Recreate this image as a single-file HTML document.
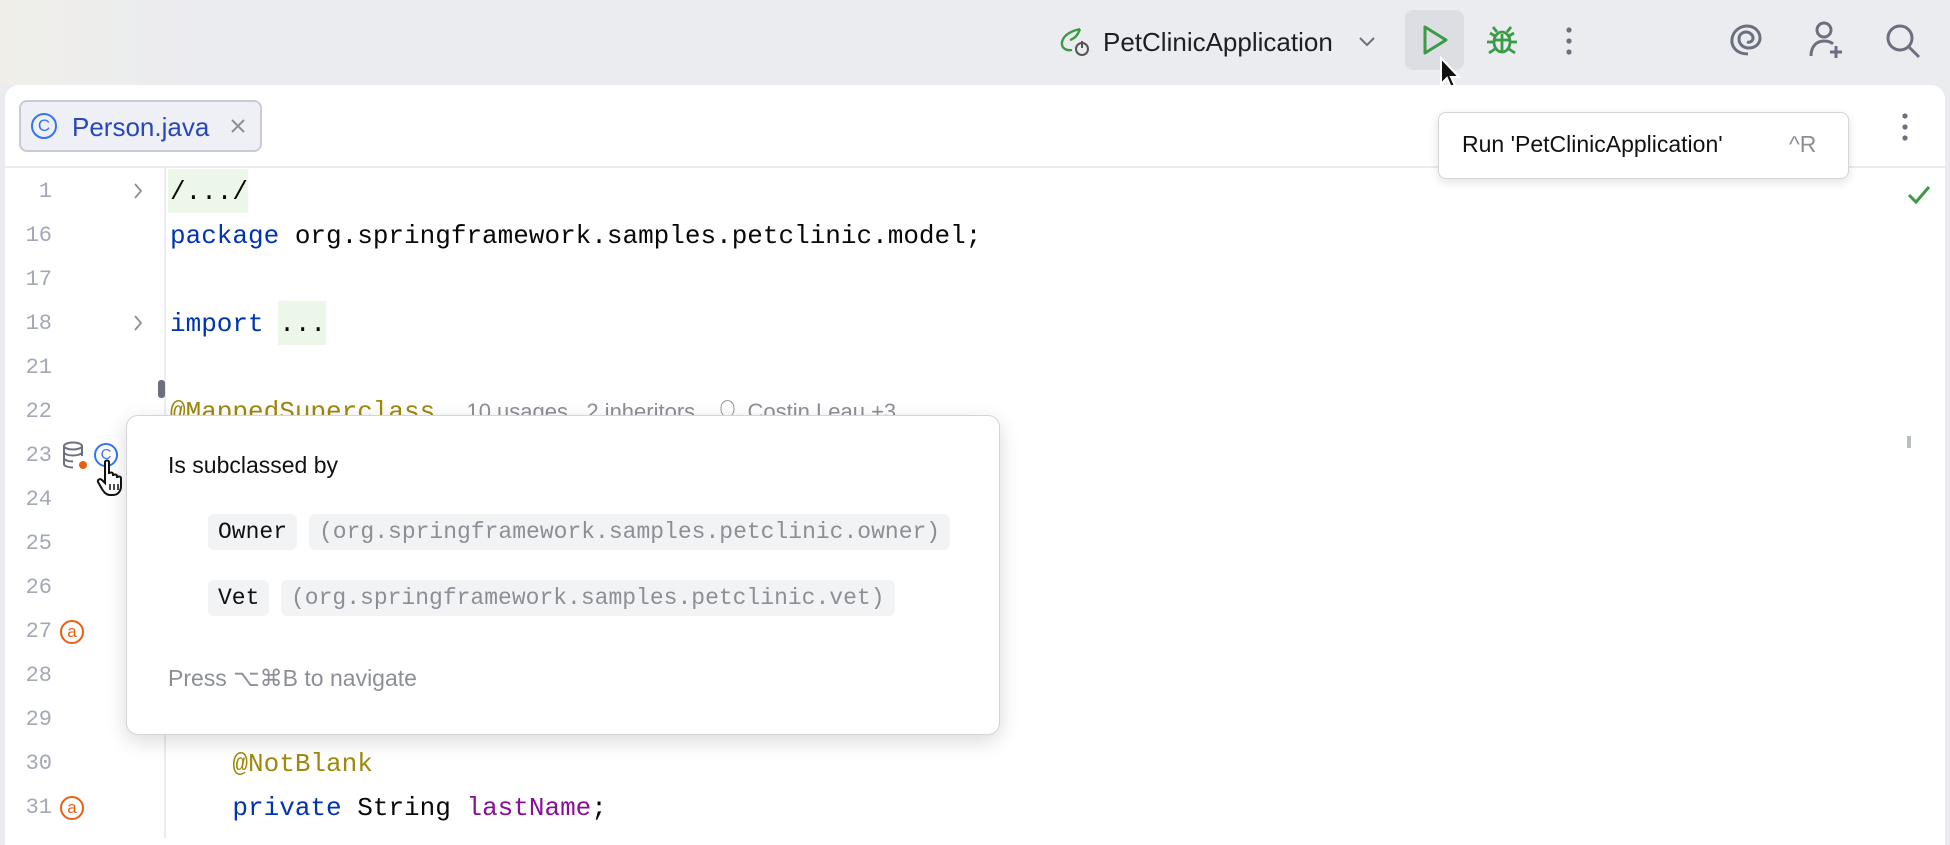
<!DOCTYPE html>
<html><head><meta charset="utf-8">
<style>
*{margin:0;padding:0;box-sizing:border-box}
body{width:1950px;height:838px;overflow:hidden;background:#ebecf0;font-family:"Liberation Sans",sans-serif;position:relative}
.top{position:absolute;left:0;top:0;width:1950px;height:85px;background:linear-gradient(90deg,#efeee9 0,#ebecf0 200px)}
.ed{position:absolute;left:5px;top:85px;width:1940px;height:760px;background:#fff;border-radius:14px 14px 0 0}
.abs{position:absolute}
.mono{font-family:"Liberation Mono",monospace}
.ln{position:absolute;left:0;width:52px;text-align:right;font-family:"Liberation Mono",monospace;font-size:22px;color:#a3a8b4;line-height:44px}
.code{position:absolute;left:170px;font-family:"Liberation Mono",monospace;font-size:26px;color:#080808;line-height:44px;white-space:pre}
.kw{color:#0033b3}.an{color:#9e880d}.fd{color:#871094}
.hint{font-family:"Liberation Sans",sans-serif;font-size:22px;color:#8c8f96}
.chip{position:absolute;height:36px;line-height:36px;background:#f2f3f5;border-radius:6px;padding:0 10px;font-family:"Liberation Mono",monospace;font-size:23px;white-space:pre}
.ai{position:absolute;left:60px;width:24px;height:24px;border:2px solid #e5600f;border-radius:50%;color:#e5600f;font-size:17px;line-height:19px;text-align:center}
</style></head><body>
<div class="top"></div>
<!-- top toolbar -->
<svg class="abs" style="left:1058px;top:26px" width="36" height="32" viewBox="0 0 36 32"><path d="M22 3 C14 5 6 8 4 16 C3 22 8 25 14 24" fill="none" stroke="#3b9b45" stroke-width="2.4"/><path d="M22 3 C20 8 18 12 12 14" fill="none" stroke="#3b9b45" stroke-width="2.4"/><circle cx="24" cy="23" r="6" fill="none" stroke="#555" stroke-width="2"/><path d="M24 15v7" stroke="#555" stroke-width="2"/></svg>
<div class="abs" style="left:1103px;top:27px;font-size:26px;color:#1e1f22">PetClinicApplication</div>
<svg class="abs" style="left:1358px;top:36px" width="18" height="12"><path d="M2 2l7 7 7-7" fill="none" stroke="#6c707e" stroke-width="2"/></svg>
<div class="abs" style="left:1405px;top:10px;width:59px;height:60px;background:#dcdee3;border-radius:8px"></div>
<svg class="abs" style="left:1420px;top:24px" width="30" height="32"><path d="M5 3 L26 16 L5 29 Z" fill="none" stroke="#3b9b45" stroke-width="3" stroke-linejoin="round"/></svg>
<svg class="abs" style="left:1484px;top:22px" width="36" height="36" viewBox="0 0 36 36" fill="none" stroke="#3b9b45" stroke-width="2.8"><ellipse cx="18" cy="20" rx="8" ry="10"/><path d="M10 18h16M18 12v18M13 10l-4-5M23 10l4-5M10 20H3M26 20h7M11 27l-6 4M25 27l6 4M11 14l-5-3M25 14l5-3"/></svg>
<svg class="abs" style="left:1564px;top:26px" width="10" height="30"><circle cx="5" cy="4" r="2.6" fill="#6c707e"/><circle cx="5" cy="15" r="2.6" fill="#6c707e"/><circle cx="5" cy="26" r="2.6" fill="#6c707e"/></svg>
<svg class="abs" style="left:1728px;top:22px" width="36" height="36" viewBox="0 0 36 36" fill="none" stroke="#6c707e" stroke-width="3"><path d="M20 32 C8 32 3 24 4 17 C5 9 12 4 19 4 C27 4 32 10 32 16 C32 22 27 26 21 26 C15 26 11 22 11 17 C11 12 15 10 18 10 C22 10 25 13 25 16 C25 19 22 21 19 20"/></svg>
<svg class="abs" style="left:1808px;top:20px" width="38" height="40" viewBox="0 0 38 40" fill="none" stroke="#6c707e" stroke-width="3"><circle cx="16" cy="10" r="7"/><path d="M3 36 C3 26 9 21 16 21 C20 21 23 22 25 24"/><path d="M28 26v12M22 32h12"/></svg>
<svg class="abs" style="left:1884px;top:22px" width="38" height="38" viewBox="0 0 38 38" fill="none" stroke="#6c707e" stroke-width="3"><circle cx="16" cy="16" r="12"/><path d="M25 25l10 10"/></svg>
<!-- cursor -->
<svg class="abs" style="left:1438px;top:56px" width="24" height="36" viewBox="0 0 24 36"><path d="M3 2 L3 28 L9 22 L13 32 L17 30 L13 21 L21 21 Z" fill="#111" stroke="#fff" stroke-width="2"/></svg>

<div class="ed"></div>
<!-- tab -->
<div class="abs" style="left:19px;top:100px;width:243px;height:52px;background:#eef0f5;border:2px solid #c9ccd6;border-radius:8px"></div>
<div class="abs" style="left:31px;top:113px;width:26px;height:26px;border:2.5px solid #3574f0;border-radius:50%;color:#3574f0;font-size:17px;line-height:21px;text-align:center">C</div>
<div class="abs" style="left:72px;top:112px;font-size:26px;color:#2847b8">Person.java</div>
<svg class="abs" style="left:229px;top:117px" width="18" height="18"><path d="M3 3l12 12M15 3L3 15" stroke="#8c8f96" stroke-width="2"/></svg>
<svg class="abs" style="left:1900px;top:112px" width="10" height="30"><circle cx="5" cy="4" r="2.6" fill="#6c707e"/><circle cx="5" cy="15" r="2.6" fill="#6c707e"/><circle cx="5" cy="26" r="2.6" fill="#6c707e"/></svg>
<div class="abs" style="left:5px;top:166px;width:1940px;height:2px;background:#ebecf0"></div>
<div class="abs" style="left:164px;top:168px;width:2px;height:670px;background:#ebecf0"></div>
<svg class="abs" style="left:1906px;top:184px" width="26" height="22"><path d="M3 11l7 7L23 3" fill="none" stroke="#3b9b45" stroke-width="3"/></svg>
<div class="abs" style="left:158px;top:380px;width:7px;height:18px;background:#6c707e;border-radius:3px"></div>
<div class="abs" style="left:1907px;top:436px;width:4px;height:12px;background:#b8bcc5"></div>

<!-- line numbers -->
<div class="ln" style="top:170px">1</div>
<div class="ln" style="top:214px">16</div>
<div class="ln" style="top:258px">17</div>
<div class="ln" style="top:302px">18</div>
<div class="ln" style="top:346px">21</div>
<div class="ln" style="top:390px">22</div>
<div class="ln" style="top:434px">23</div>
<div class="ln" style="top:478px">24</div>
<div class="ln" style="top:522px">25</div>
<div class="ln" style="top:566px">26</div>
<div class="ln" style="top:610px">27</div>
<div class="ln" style="top:654px">28</div>
<div class="ln" style="top:698px">29</div>
<div class="ln" style="top:742px">30</div>
<div class="ln" style="top:786px">31</div>
<svg class="abs" style="left:132px;top:181px" width="12" height="20"><path d="M3 3l6 7-6 7" fill="none" stroke="#8c8f96" stroke-width="1.8"/></svg>
<svg class="abs" style="left:132px;top:313px" width="12" height="20"><path d="M3 3l6 7-6 7" fill="none" stroke="#8c8f96" stroke-width="1.8"/></svg>
<div class="ai" style="top:620px">a</div>
<div class="ai" style="top:796px">a</div>
<svg class="abs" style="left:62px;top:441px" width="28" height="30" viewBox="0 0 28 30" fill="none" stroke="#6c707e" stroke-width="2"><ellipse cx="11" cy="5" rx="9" ry="3.5"/><path d="M2 5v18c0 2 4 3.5 9 3.5M20 5v10M2 11c0 2 4 3.5 9 3.5s9-1.5 9-3.5M2 17c0 2 4 3.5 9 3.5"/><circle cx="21" cy="24" r="4" fill="#e5600f" stroke="none"/></svg>
<div class="abs" style="left:94px;top:443px;width:24px;height:24px;border:2.5px solid #3574f0;border-radius:50%;color:#3574f0;font-size:15px;line-height:19px;text-align:center">C</div>
<svg class="abs" style="left:96px;top:458px" width="34" height="40" viewBox="0 0 34 40"><path d="M9 4c0-2 4-2 4 0v12c0-2 4-2 4 0v2c0-2 4-2 4 0v2c0-2 4-2 4 0v8c0 5-3 9-8 9h-3c-4 0-6-3-8-6l-4-7c-1-2 2-4 4-2l3 3z" fill="#fff" stroke="#111" stroke-width="2"/><path d="M14 26v6M18 26v6M22 26v6" stroke="#111" stroke-width="1.5"/></svg>

<!-- code -->
<div class="abs" style="left:168px;top:169px;width:80px;height:44px;background:#edf7e9"></div>
<div class="code" style="top:170px">/.../</div>
<div class="code" style="top:214px"><span class="kw">package</span> org.springframework.samples.petclinic.model;</div>
<div class="abs" style="left:278px;top:301px;width:48px;height:44px;background:#edf7e9"></div>
<div class="code" style="top:302px"><span class="kw">import</span> ...</div>
<div class="code" style="top:390px"><span class="an">@MappedSuperclass</span>  <span class="hint">10 usages   2 inheritors   &#x1F464;&#xFE0E; Costin Leau +3</span></div>
<div class="code" style="top:742px">    <span class="an">@NotBlank</span></div>
<div class="code" style="top:786px">    <span class="kw">private</span> String <span class="fd">lastName</span>;</div>

<!-- popup -->
<div class="abs" style="left:126px;top:415px;width:874px;height:320px;background:#fff;border:1.5px solid #d3d5db;border-radius:12px;box-shadow:0 6px 20px rgba(0,0,0,0.15)"></div>
<div class="abs" style="left:168px;top:452px;font-size:23px;color:#111">Is subclassed by</div>
<div class="chip" style="left:208px;top:514px;color:#111">Owner</div>
<div class="chip" style="left:309px;top:514px;color:#8c8f96">(org.springframework.samples.petclinic.owner)</div>
<div class="chip" style="left:208px;top:580px;color:#111">Vet</div>
<div class="chip" style="left:281px;top:580px;color:#8c8f96">(org.springframework.samples.petclinic.vet)</div>
<div class="abs" style="left:168px;top:665px;font-size:23px;color:#8c8f96">Press ⌥⌘B to navigate</div>

<!-- tooltip -->
<div class="abs" style="left:1438px;top:112px;width:411px;height:67px;background:#fff;border:1.5px solid #d3d5db;border-radius:8px;box-shadow:0 3px 10px rgba(0,0,0,0.12)"></div>
<div class="abs" style="left:1462px;top:131px;font-size:23px;color:#111">Run 'PetClinicApplication'</div>
<div class="abs" style="left:1789px;top:131px;font-size:23px;color:#8c8f96">^R</div>
</body></html>
